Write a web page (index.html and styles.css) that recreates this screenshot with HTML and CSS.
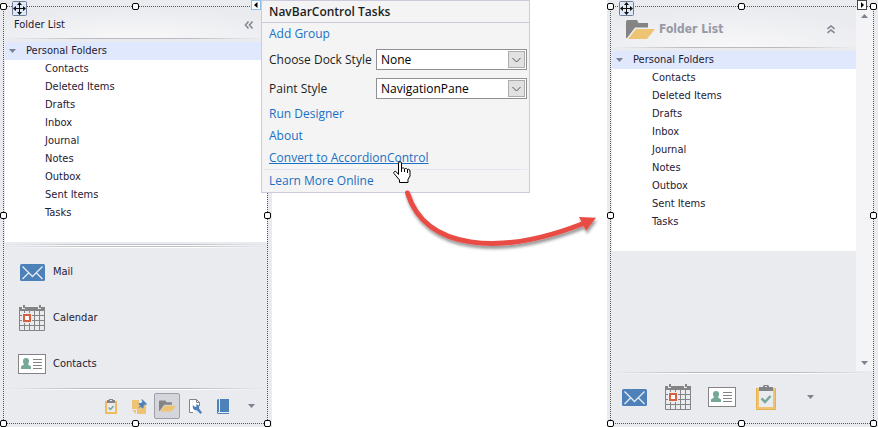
FILE: index.html
```html
<!DOCTYPE html>
<html lang="en">
<head>
<meta charset="utf-8">
<title>Convert NavBarControl to AccordionControl</title>
<link rel="stylesheet" href="styles.css">
</head>
<body>
<svg class="sprite" aria-hidden="true">
  <symbol id="mail" viewBox="0 0 25 17">
    <rect width="25" height="17" rx="1.5" fill="#4c82b9"/>
    <path d="M2.500 2.500L10.500 10.500 12.500 12.500 14.500 10.500 22.500 2.500M2.500 15L9 8.500M22.500 15L16 8.500" fill="none" stroke="#eaebef" stroke-width="1.300"/>
  </symbol>
  <symbol id="calendar" viewBox="0 0 26 26">
    <path d="M0 2h3v2h3V2h13v2h3V2h4v4H0zM4 0h2v3H4zM20 0h2v3h-2z" fill="#848484"/>
    <path d="M.5 6v19.500h25V6M5.500 6v19M10.500 6v19M15.500 6v19M20.500 6v19M0 10.500h26M0 15.500h26M0 20.500h26" fill="none" stroke="#848484"/>
    <rect x="3" y="8" width="10" height="10" fill="#eaebef"/>
    <rect x="5" y="10" width="6" height="6" fill="#fff" stroke="#d95f42" stroke-width="2"/>
  </symbol>
  <symbol id="contacts" viewBox="0 0 28 20">
    <rect x=".5" y=".5" width="27" height="19" fill="#fff" stroke="#848484"/>
    <path d="M8 4c2 0 3 1 3 3.200 0 1.300-.5 2.300-1.200 3 .4 1 3.200 1 3.200 3V15H3v-1.800c0-2 2.800-2 3.200-3C5.500 9.500 5 8.500 5 7.200 5 5 6 4 8 4z" fill="#76a797"/>
    <path d="M15 5.500h9M15 8.500h9M15 11.500h9M15 14.500h9" stroke="#848484"/>
  </symbol>
  <symbol id="tasks" viewBox="0 0 20 25">
    <path d="M0 3h3v3h14V3h3v22H0z" fill="#eec373"/>
    <path d="M.5 3v21.500h19V3" fill="none" stroke="#eab04d"/>
    <path d="M3 6h14v16H3z" fill="#eaebef"/>
    <path d="M3 2h4V1l1-1h4l1 1v1h4v4H3z" fill="#848484"/>
    <path d="M9 1h2v1H9z" fill="#eaebef"/>
    <path d="M5.500 13.500l3.500 3.500 5.500-6" fill="none" stroke="#76a797" stroke-width="2.500"/>
  </symbol>
  <symbol id="tasks-small" viewBox="0 0 12 15">
    <path d="M1 2v12h10V2" fill="none" stroke="#eebb61" stroke-width="2"/>
    <path d="M2 1h2V0h4v1h2v3H2z" fill="#848484"/>
    <path d="M5 1h2v1H5z" fill="#eaebef"/>
    <path d="M3.500 8.500l2 2 3-3.500" fill="none" stroke="#76a797" stroke-width="1.500"/>
  </symbol>
  <symbol id="note" viewBox="0 0 15 15">
    <path d="M0 1h7v5h7v9H5v-5H0zM0 11h4v4z" fill="#eec373"/>
    <path d="M10 0l5 5-1 1-1-.5-1.500 1.500v2l-1 .5-2-2L7 9 6.500 8.500 8 6.500 6.500 5l.5-1h2L10.500 2.500 9.500 1z" fill="#4c82b9"/>
  </symbol>
  <symbol id="folder" viewBox="0 0 29 19">
    <path d="M0 18V1.500L1 0h10l1.500 3H22v4.500H9L1 18z" fill="#848484"/>
    <path d="M10 9h19l-8 10H2z" fill="#eec373"/>
  </symbol>
  <symbol id="page-tool" viewBox="0 0 14 15">
    <path d="M5 13.500H1.500V.5h7l3 3V7" fill="#fff" stroke="#848484"/>
    <path d="M8.500.5v3h3" fill="none" stroke="#848484"/>
    <path d="M5 6l2 2 1.500-.5L8 5.500c2-.5 4 1 3 4l3 4-1.500 1.500-4-4C6 12 4 9 5 6z" fill="#4c82b9"/>
  </symbol>
  <symbol id="book" viewBox="0 0 12 15">
    <path d="M0 1l1-1h1v13H1v1h11v1H1l-1-1zM3 0h9v13H3z" fill="#4c82b9"/>
  </symbol>
  <symbol id="down" viewBox="0 0 7 4"><path d="M0 0h7L3.500 4z" fill="#7f8290"/></symbol>
  <symbol id="chevrons" viewBox="0 0 9 8">
    <path d="M4 .5L1 4l3 3.500M8 .5L5 4l3 3.500" fill="none" stroke="#858894" stroke-width="1.600"/>
  </symbol>
  <symbol id="chevrons-up" viewBox="0 0 8 9">
    <path d="M.5 4L4 1l3.500 3M.5 8L4 5l3.500 3" fill="none" stroke="#858894" stroke-width="1.600"/>
  </symbol>
  <symbol id="move" viewBox="0 0 15 15">
    <rect x=".5" y=".5" width="14" height="14" rx="1" fill="#dfe8f5" stroke="#6f7f99"/>
    <path d="M7.500 2v11M2 7.500h11" stroke="#111"/>
    <path d="M7.500 1L10 4H5zM7.500 14L10 11H5zM1 7.500L4 5v5zM14 7.500L11 5v5z" fill="#111"/>
  </symbol>
</svg>

<main class="stage">
  <section class="control" aria-label="NavBarControl">
    <header class="head">
      <h2 class="head-title">Folder List</h2>
      <button class="plain" aria-label="Collapse"><svg width="10" height="8"><use href="#chevrons"/></svg></button>
    </header>
    <div class="tree">
      <div class="root"><svg width="7" height="4"><use href="#down"/></svg>Personal Folders</div>
      <ul class="nodes">
        <li>Contacts</li><li>Deleted Items</li><li>Drafts</li><li>Inbox</li><li>Journal</li><li>Notes</li><li>Outbox</li><li>Sent Items</li><li>Tasks</li>
      </ul>
    </div>
    <div class="splitter"></div>
    <nav class="groups">
      <button class="group"><svg width="25" height="17"><use href="#mail"/></svg>Mail</button>
      <button class="group"><svg width="26" height="26"><use href="#calendar"/></svg>Calendar</button>
      <button class="group"><svg width="28" height="20"><use href="#contacts"/></svg>Contacts</button>
    </nav>
    <div class="rule"></div>
    <div class="overflow">
      <button class="tool" aria-label="Tasks"><svg width="12" height="15"><use href="#tasks-small"/></svg></button>
      <button class="tool" aria-label="Notes"><svg width="15" height="15"><use href="#note"/></svg></button>
      <button class="tool pressed" aria-label="Folder List"><svg width="17" height="12"><use href="#folder"/></svg></button>
      <button class="tool" aria-label="Shortcuts"><svg width="14" height="15"><use href="#page-tool"/></svg></button>
      <button class="tool" aria-label="Journal"><svg width="12" height="15"><use href="#book"/></svg></button>
      <button class="tool" aria-label="More"><svg width="7" height="4"><use href="#down"/></svg></button>
    </div>
    <div class="selection">
      <i class="grip nw"></i><i class="grip n"></i><i class="grip w"></i><i class="grip e"></i><i class="grip sw"></i><i class="grip s"></i><i class="grip se"></i>
      <svg class="mover" width="15" height="15"><use href="#move"/></svg>
      <svg class="tag" width="10" height="10" viewBox="0 0 10 10"><rect width="10" height="10" fill="#fff"/><rect x=".5" y=".5" width="9" height="9" fill="none" stroke="#187bd2" stroke-dasharray="1 1"/><path d="M6.500 2v6L3 5z" fill="#000"/></svg>
    </div>
  </section>

  <div class="between">
    <section class="popup" aria-label="NavBarControl Tasks">
      <h1 class="popup-title">NavBarControl Tasks</h1>
      <div class="popup-body">
        <a class="link" href="#">Add Group</a>
        <div class="field"><label for="dock">Choose Dock Style</label><span class="combo"><select id="dock"><option>None</option></select><svg class="drop" viewBox="0 0 17 17"><rect x=".5" y=".5" width="16" height="16" fill="#e1e1e1" stroke="#adadad"/><path d="M4.500 7l4 4 4-4" fill="none" stroke="#555"/></svg></span></div>
        <div class="field"><label for="paint">Paint Style</label><span class="combo"><select id="paint"><option>NavigationPane</option></select><svg class="drop" viewBox="0 0 17 17"><rect x=".5" y=".5" width="16" height="16" fill="#e1e1e1" stroke="#adadad"/><path d="M4.500 7l4 4 4-4" fill="none" stroke="#555"/></svg></span></div>
        <a class="link" href="#">Run Designer</a>
        <a class="link" href="#">About</a>
        <a class="link active" href="#">Convert to AccordionControl</a>
        <a class="link last" href="#">Learn More Online</a>
      </div>
    </section>
    <svg class="arrow" width="210" height="80" viewBox="400 180 210 80">
      <defs><filter id="shade" x="-10%" y="-10%" width="120%" height="140%"><feDropShadow dx="1" dy="3" stdDeviation="1.500" flood-color="#000" flood-opacity=".4"/></filter></defs>
      <g filter="url(#shade)"><path d="M407.500 193C425 250 500 256 582 224" fill="none" stroke="#e94b45" stroke-width="5" stroke-linecap="round"/><path d="M579 217l17 .7-10 13z" fill="#e94b45"/></g>
    </svg>
    <svg class="hand" width="18" height="22" viewBox="0 0 18 22"><path d="M5.500 13.500V2C5.500.2 8.500.2 8.500 2v6c0-1.500 3-1.500 3 .5 0-1.500 3-1.500 3 .5 0-1.200 2.500-1 2.500 1v5l-2 3.500v3H6.500v-2.500L1 12.500C0 11 2 9.500 3.500 11z" fill="#fff" stroke="#000"/><path d="M8.500 7v4M11.500 8v3M14.500 9v3" stroke="#000"/></svg>
  </div>

  <section class="control" aria-label="AccordionControl">
    <div class="scroller">
      <div class="pane">
        <header class="head tall">
          <svg width="29" height="19"><use href="#folder"/></svg>
          <h2 class="head-title strong">Folder List</h2>
          <button class="plain" aria-label="Collapse"><svg width="8" height="9"><use href="#chevrons-up"/></svg></button>
        </header>
        <div class="tree">
          <div class="root"><svg width="7" height="4"><use href="#down"/></svg>Personal Folders</div>
          <ul class="nodes">
            <li>Contacts</li><li>Deleted Items</li><li>Drafts</li><li>Inbox</li><li>Journal</li><li>Notes</li><li>Outbox</li><li>Sent Items</li><li>Tasks</li>
          </ul>
        </div>
      </div>
      <div class="scrollbar"><svg class="flip" width="7" height="4"><use href="#down"/></svg><svg width="7" height="4"><use href="#down"/></svg></div>
    </div>
    <div class="rule"></div>
    <div class="dock">
      <button class="tile" aria-label="Mail"><svg width="25" height="17"><use href="#mail"/></svg></button>
      <button class="tile" aria-label="Calendar"><svg width="26" height="26"><use href="#calendar"/></svg></button>
      <button class="tile" aria-label="Contacts"><svg width="28" height="20"><use href="#contacts"/></svg></button>
      <button class="tile" aria-label="Tasks"><svg width="20" height="25"><use href="#tasks"/></svg></button>
      <button class="tile" aria-label="More"><svg width="7" height="4"><use href="#down"/></svg></button>
    </div>
    <div class="selection">
      <i class="grip nw"></i><i class="grip n"></i><i class="grip ne"></i><i class="grip w"></i><i class="grip e"></i><i class="grip sw"></i><i class="grip s"></i><i class="grip se"></i>
      <svg class="mover" width="15" height="15"><use href="#move"/></svg>
      <svg class="tag" width="10" height="10" viewBox="0 0 10 10"><rect x=".5" y=".5" width="9" height="9" fill="#fff" stroke="#444"/><path d="M4 2v6l3-3z" fill="#000"/></svg>
    </div>
  </section>
</main>
</body>
</html>
```
FILE: styles.css
```css
* { box-sizing: border-box; }

body {
  margin: 0;
  background: #fff;
  color: #1f2033;
  font: 11px/18px "DejaVu Sans Condensed", "Noto Sans", sans-serif;
}

h1, h2, ul { margin: 0; padding: 0; }
ul { list-style: none; }
svg { display: block; flex: none; }
button { border: 0; padding: 0; background: none; color: inherit; font: inherit; }
.sprite { position: absolute; width: 0; height: 0; }

.stage {
  display: grid;
  grid-template-columns: 272fr 335fr 271fr;
  min-height: 100vh;
}

.control {
  position: relative;
  display: flex;
  flex-direction: column;
  padding: 8px 5px 5px;
  background: #eaebef;
}

.head {
  display: flex;
  align-items: center;
  height: 34px;
  padding: 2px 13px 0 9px;
  border-bottom: 3px solid #eaebef;
  background:
    linear-gradient(90deg, transparent, #b9bac1 30%, #b9bac1 70%, transparent) bottom / 100% 1px no-repeat,
    radial-gradient(ellipse 65% 100% at 50% 100%, #f8f8f9, #eaebef);
}
.head.tall { height: 43px; padding: 2px 21px 0 14px; gap: 4px; }
.head-title { flex: 1; font-size: 11px; font-weight: 400; }
.head-title.strong { color: #9899a5; font-size: 12px; font-weight: 700; }

.tree { min-height: 200px; background: #fff; }
.root { display: flex; align-items: center; gap: 10px; padding-left: 4px; background: #e0e8fd; }
.nodes { padding-left: 40px; }

.splitter {
  height: 7px;
  background:
    linear-gradient(90deg, transparent, #bfc0c7 30%, #bfc0c7 70%, transparent) 0 2px / 100% 1px no-repeat,
    linear-gradient(90deg, transparent, #fff 30%, #fff 70%, transparent) 0 3px / 100% 1px no-repeat,
    linear-gradient(90deg, transparent, #bfc0c7 30%, #bfc0c7 70%, transparent) 0 4px / 100% 1px no-repeat,
    linear-gradient(90deg, transparent, #fff 30%, #fff 70%, transparent) 0 5px / 100% 1px no-repeat;
}
.groups { flex: 1; }
.group {
  display: grid;
  grid-template-columns: 28px 1fr;
  align-items: center;
  gap: 7px;
  width: 100%;
  height: 46px;
  padding-left: 13px;
  text-align: left;
}
.group svg { justify-self: center; }

.rule {
  height: 3px;
  background:
    linear-gradient(90deg, transparent, #b9bac1 30%, #b9bac1 70%, transparent) 0 1px / 100% 1px no-repeat,
    linear-gradient(90deg, transparent, #fff 30%, #fff 70%, transparent) 0 2px / 100% 1px no-repeat;
}

.overflow {
  display: flex;
  justify-content: flex-end;
  align-items: center;
  gap: 2px;
  height: 32px;
  padding-right: 3px;
}
.tool { display: flex; align-items: center; justify-content: center; width: 26px; height: 26px; }
.pressed { border: 1px solid #9d9ea8; border-radius: 2px; background: #d5d6dc; }

.scroller { display: flex; flex: 1; }
.pane { flex: 1; }
.scrollbar {
  display: flex;
  flex-direction: column;
  align-items: center;
  justify-content: space-between;
  width: 17px;
  padding: 6px 0;
  background: #f4f4f6;
}
.flip { transform: rotate(180deg); }
.dock { display: flex; align-items: flex-start; height: 48px; }
.tile { display: flex; align-items: center; justify-content: center; width: 44px; height: 46px; }

/* Designer selection frame */
.selection { position: absolute; inset: 6px 4px 3px 3px; border: 1px dotted #555; pointer-events: none; }
.grip {
  position: absolute;
  width: 7px;
  height: 7px;
  margin: -4px;
  border: 1px solid #000;
  border-radius: 2px;
  background: #fff;
}
.nw, .n, .ne { top: 0; }
.w, .e { top: 50%; margin-top: -3px; }
.sw, .s, .se { bottom: 0; }
.nw, .w, .sw { left: 0; }
.n, .s { left: 50%; }
.ne, .e, .se { right: 0; }
.mover { position: absolute; left: 8px; top: -6px; }
.tag { position: absolute; right: 6px; top: -7px; }

/* Smart tag popup */
.between { position: relative; color: #1e1e1e; font: 12px/22px "Open Sans", "Noto Sans", sans-serif; }
.popup {
  position: absolute;
  left: -11px;
  top: 0;
  width: 269px;
  border: 1px solid #cbcbdd;
  background: #f4f4f4;
}
.popup-title {
  padding-left: 7px;
  border-bottom: 1px solid #cbcbdd;
  font-size: 12px;
  font-weight: 600;
  line-height: 21px;
}
.popup-body { display: flex; flex-direction: column; padding: 0 2px; }
.link { padding: 0 5px; color: #1a70c4; text-decoration: none; }
.active { text-decoration: underline; }
.last { border-top: 1px solid #e6e6ee; line-height: 22px; }
.field { display: flex; align-items: center; justify-content: space-between; height: 29px; padding-left: 5px; white-space: nowrap; }
.combo { position: relative; flex: 0 0 151px; }
.combo select {
  display: block;
  appearance: none;
  width: 100%;
  height: 21px;
  padding: 0 20px 0 4px;
  border: 1px solid #8f8f94;
  border-radius: 0;
  background: #fff;
  color: #000;
  font: 12px/19px "Open Sans", "Noto Sans", sans-serif;
}
.drop { position: absolute; right: 2px; top: 2px; width: 17px; height: 17px; pointer-events: none; }
.arrow { position: absolute; left: 128px; top: 180px; }
.hand { position: absolute; left: 121px; top: 161px; }
```
